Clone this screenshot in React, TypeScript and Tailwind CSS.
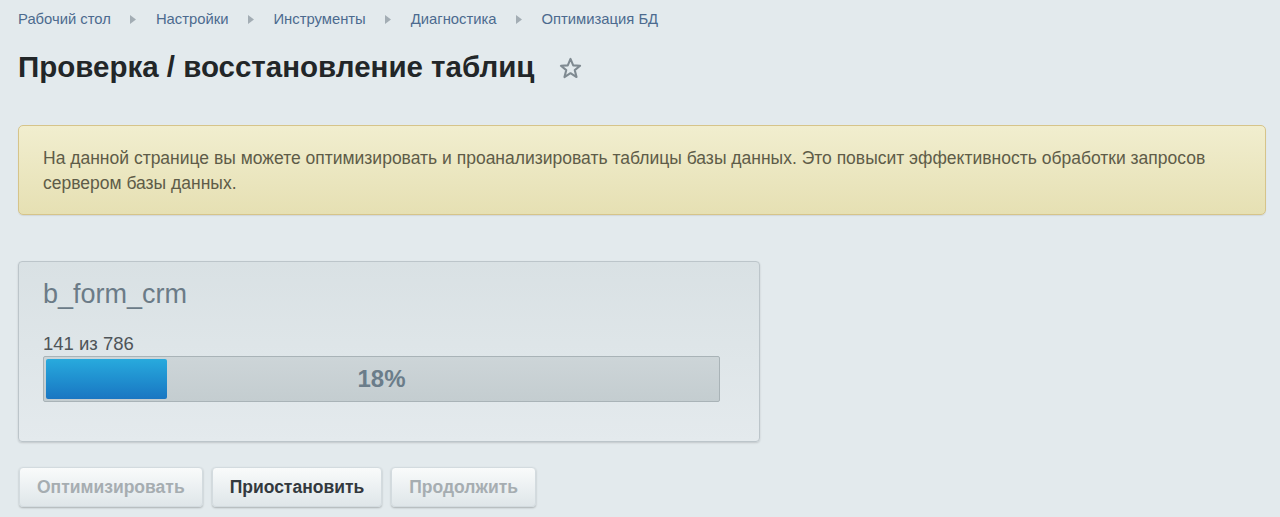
import React from 'react'

const crumbs = ['Рабочий стол', 'Настройки', 'Инструменты', 'Диагностика', 'Оптимизация БД']

function Arrow() {
  return (
    <svg width="6" height="9" viewBox="0 0 6 9" className="mx-[19.5px]">
      <path d="M0 0 L6 4.5 L0 9 Z" fill="#a3adb4" />
    </svg>
  )
}

function Star() {
  return (
    <svg width="25" height="25" viewBox="0 0 24 24" className="ml-[24px] mt-[2px]">
      <path
        d="M12 2.8 L14.6 9 L21.2 9.4 L16.1 13.6 L17.8 20.2 L12 16.5 L6.2 20.2 L7.9 13.6 L2.8 9.4 L9.4 9 Z"
        fill="none"
        stroke="#7f8a91"
        strokeWidth="2"
        strokeLinejoin="round"
      />
    </svg>
  )
}

function Button({ label, disabled }: { label: string; disabled?: boolean }) {
  return (
    <button
      className={
        'h-[40px] px-[17px] rounded-[4px] text-[17.5px] font-bold bg-gradient-to-b from-[#f9fbfb] to-[#dfe6e9] border border-[#d3dbdf] shadow-[0_1px_2px_rgba(0,0,0,0.25)] ' +
        (disabled ? 'text-[#a6adb1]' : 'text-[#33393e]')
      }
    >
      {label}
    </button>
  )
}

export default function App() {
  const done = 141
  const total = 786
  const pct = Math.round((done / total) * 100)

  return (
    <div
      className="min-h-[517px] bg-[#e3eaed] pl-[18px] pr-[14px] pt-[10px] text-[#333]"
      style={{ fontFamily: '"Liberation Sans", Arial, sans-serif' }}
    >
      <div className="flex items-center h-[18px] text-[14.8px] text-[#4c6a8f]">
        {crumbs.map((c, i) => (
          <React.Fragment key={c}>
            {i > 0 && <Arrow />}
            <span>{c}</span>
          </React.Fragment>
        ))}
      </div>

      <div className="flex items-center mt-[21px]">
        <h1 className="text-[29.5px] font-bold text-[#222628] leading-[36px]">
          Проверка / восстановление таблиц
        </h1>
        <Star />
      </div>

      <div className="mt-[40px] rounded-[5px] border border-[#d6c48a] bg-gradient-to-b from-[#f1eecf] to-[#e6e0b3] px-[24px] pt-[20px] pb-[18px] shadow-[0_1px_1px_rgba(0,0,0,0.08)]">
        <p className="text-[17.5px] leading-[25px] text-[#5e5c48]">
          На данной странице вы можете оптимизировать и проанализировать таблицы базы данных. Это повысит эффективность
          обработки запросов сервером базы данных.
        </p>
      </div>

      <div className="mt-[46px] w-[742px] rounded-[4px] border border-[#bcc5ca] bg-gradient-to-b from-[#d9e1e4] to-[#e4eaed] px-[24px] pt-[17px] pb-[39px] shadow-[0_1px_2px_rgba(0,0,0,0.15)]">
        <div className="text-[27px] leading-[30px] text-[#6b7b87]">b_form_crm</div>
        <div className="mt-[25px] text-[18.5px] leading-[20px] text-[#4e5458]">
          {done} из {total}
        </div>
        <div className="relative mt-[2px] h-[46px] w-[677px] rounded-[2px] border border-[#a9b3b7] bg-gradient-to-b from-[#cdd5d8] to-[#c4cdd0] p-[2px]">
          <div
            className="h-full rounded-[2px] bg-gradient-to-b from-[#28aadd] to-[#1a76c2]"
            style={{ width: `${pct}%` }}
          />
          <div className="absolute inset-0 flex items-center justify-center text-[24px] font-bold text-[#6b7d8a]">
            {pct}%
          </div>
        </div>
      </div>

      <div className="mt-[25px] flex gap-[9px] pl-[1px]">
        <Button label="Оптимизировать" disabled />
        <Button label="Приостановить" />
        <Button label="Продолжить" disabled />
      </div>
    </div>
  )
}
